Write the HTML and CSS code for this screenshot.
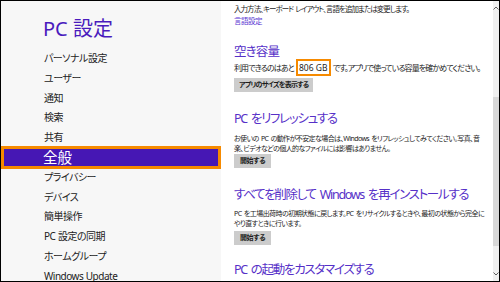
FILE: index.html
```html
<!DOCTYPE html>
<html lang="ja">
<head>
<meta charset="UTF-8">
<meta name="viewport" content="width=device-width, initial-scale=1.0">
<title>PC 設定</title>
<link rel="stylesheet" href="styles.css">
</head>
<body>

<div class="frame">
    <div class="nav">
        <h1 class="nav-title">PC 設定</h1>
        <ul class="nav-list">
            <li>パーソナル設定</li>
            <li>ユーザー</li>
            <li>通知</li>
            <li>検索</li>
            <li>共有</li>
            <li class="selected">全般</li>
            <li>プライバシー</li>
            <li>デバイス</li>
            <li>簡単操作</li>
            <li>PC 設定の同期</li>
            <li>ホームグループ</li>
            <li>Windows Update</li>
        </ul>
    </div>

    <div class="main">
        <p class="top-text">入力方法、キーボード レイアウト、言語を追加または変更します。</p>
        <a class="link">言語設定</a>

        <h2 class="heading first">空き容量</h2>
        <p class="usage">利用できるのはあと <span class="highlight">806 GB</span> です。アプリで使っている容量を確かめてください。</p>
        <button class="btn">アプリのサイズを表示する</button>

        <h2 class="heading">PC をリフレッシュする</h2>
        <p class="desc refresh">お使いの PC の動作が不安定な場合は、Windows をリフレッシュしてみてください。写真、音<br>楽、ビデオなどの個人的なファイルには影響はありません。</p>
        <button class="btn start">開始する</button>

        <h2 class="heading">すべてを削除して Windows を再インストールする</h2>
        <p class="desc reset">PC を工場出荷時の初期状態に戻します。PC をリサイクルするときや、最初の状態から完全に<br>やり直すときに行います。</p>
        <button class="btn start">開始する</button>

        <h2 class="heading last">PC の起動をカスタマイズする</h2>
    </div>

    <div class="scrollbar">
        <div class="arrow">
            <svg width="6" height="4" viewBox="0 0 6 4"><path d="M0.5 3.5 L3 1 L5.5 3.5" fill="none" stroke="#606060" stroke-width="1"/></svg>
        </div>
        <div class="track"><div class="thumb"></div></div>
        <div class="arrow">
            <svg width="6" height="4" viewBox="0 0 6 4"><path d="M0.5 0.5 L3 3 L5.5 0.5" fill="none" stroke="#606060" stroke-width="1"/></svg>
        </div>
    </div>
</div>

</body>
</html>
```

FILE: styles.css
```css
body {
    margin: 0;
    font-family: "Noto Sans", "Noto Sans CJK JP", sans-serif;
    font-feature-settings: "palt";
    background-color: #fff;
}
.frame {
    width: 500px;
    height: 282px;
    box-sizing: border-box;
    border: 1px solid #000;
    display: flex;
    overflow: hidden;
}
.nav {
    width: 220px;
    flex-shrink: 0;
    background-color: #f7f7f7;
}
.nav-title {
    margin: 16px 0 0 42px;
    font-size: 20px;
    line-height: 24px;
    font-weight: normal;
    color: #4a1bbd;
}
.nav-list {
    list-style: none;
    margin: 8px 0 0;
    padding: 0;
}
.nav-list li {
    height: 19.8px;
    line-height: 19.8px;
    padding-left: 43px;
    font-size: 10px;
    letter-spacing: -0.5px;
    word-spacing: 0.5px;
    color: #222;
    white-space: nowrap;
}
.nav-list li.selected {
    height: 23px;
    line-height: 17px;
    margin: -1.6px 0;
    box-sizing: border-box;
    border: 3px solid #f68a00;
    padding-left: 39px;
    background-color: #4617b4;
    color: #fff;
    font-size: 14.5px;
    letter-spacing: 0;
}
.main {
    flex: 1;
    padding-left: 13px;
    background-color: #fff;
    overflow: hidden;
    color: #1c1c1c;
}
.top-text {
    margin: 1px 0 0;
    font-size: 7.5px;
    line-height: 14px;
    letter-spacing: -0.95px;
    word-spacing: 1px;
    white-space: nowrap;
}
.link {
    display: block;
    font-size: 7.5px;
    line-height: 10px;
    letter-spacing: -0.5px;
    color: #5a37d2;
}
.heading {
    margin: 18px 0 0;
    font-size: 12.5px;
    line-height: 18px;
    letter-spacing: -1.3px;
    word-spacing: 2px;
    font-weight: normal;
    color: #5630c8;
    white-space: nowrap;
}
.heading.first {
    margin-top: 18px;
    line-height: 16px;
    letter-spacing: -0.8px;
}
.heading.last {
    margin-top: 16px;
}
.usage {
    margin: -1px 0 0;
    font-size: 8px;
    line-height: 17px;
    letter-spacing: -0.9px;
    white-space: nowrap;
}
.highlight {
    display: inline-block;
    height: 17px;
    line-height: 13px;
    box-sizing: border-box;
    padding: 0 1px;
    margin: 0 1px;
    border: 2px solid #f68a00;
    font-size: 8.5px;
    letter-spacing: 0;
    vertical-align: top;
}
.btn {
    display: block;
    height: 14px;
    margin-top: 2px;
    padding: 0 5px;
    border: none;
    background-color: #cccccc;
    font-family: inherit;
    font-feature-settings: "palt";
    font-size: 7px;
    letter-spacing: -0.8px;
    font-weight: bold;
    line-height: 14px;
    color: #1c1c1c;
}
.btn.start {
    padding: 0 6px;
    letter-spacing: -0.4px;
}
.desc {
    margin: 6px 0 0;
    font-size: 7px;
    line-height: 9.5px;
    letter-spacing: -0.6px;
    word-spacing: 1px;
    white-space: nowrap;
}
.desc + .btn {
    margin-top: 1px;
}
.desc.reset {
    margin-top: 5px;
    line-height: 10px;
    letter-spacing: -0.55px;
}
.desc.reset + .btn {
    margin-top: 2px;
}
.scrollbar {
    width: 6px;
    flex-shrink: 0;
    display: flex;
    flex-direction: column;
    background-color: #f0f0f0;
}
.arrow {
    height: 14px;
    display: flex;
    align-items: center;
    justify-content: center;
}
.track {
    flex: 1;
}
.thumb {
    margin-top: 82px;
    height: 149px;
    background-color: #d8d8d8;
}
```
